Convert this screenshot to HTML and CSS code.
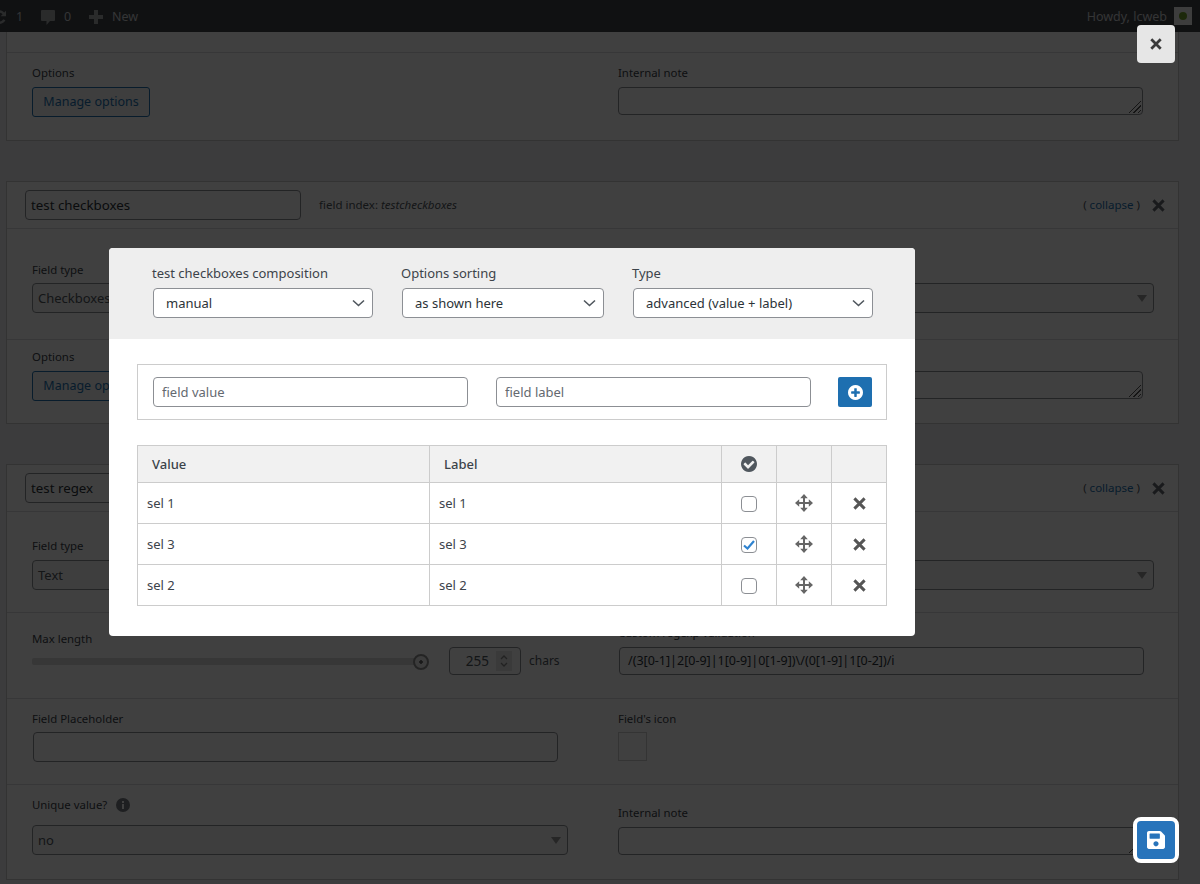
FILE: index.html
```html
<!DOCTYPE html>
<html lang="en">
<head>
<meta charset="utf-8">
<title>Field options</title>
<link rel="stylesheet" href="styles.css">
</head>
<body>
<header class="adminbar">
  <div class="bar-group">
    <svg class="bar-refresh" viewBox="0 0 20 20"><path d="M10.2 3.3c2 0 3.8.9 5 2.3l1.8-1.8v5.4h-5.400l2-2c-.9-1-2.100-1.600-3.400-1.600-2.500 0-4.500 2-4.500 4.500s2 4.500 4.500 4.500c1.700 0 3.200-1 4-2.400l2.200 1.100c-1.200 2.300-3.500 3.800-6.200 3.800-3.900 0-7-3.100-7-7s3.100-6.800 7-6.800z"/></svg>
    <span class="bar-num">1</span>
    <svg class="bar-comment" viewBox="0 0 14 16"><path d="M1 1h12a1 1 0 0 1 1 1v9a1 1 0 0 1-1 1H9l-3.500 4v-4H1a1 1 0 0 1-1-1V2a1 1 0 0 1 1-1z"/></svg>
    <span class="bar-num bar-zero">0</span>
    <svg class="bar-plus" viewBox="0 0 14 14"><path d="M5 0h4v5h5v4H9v5H5V9H0V5h5z"/></svg>
    <span class="bar-new">New</span>
  </div>
  <div class="bar-group">
    <span class="bar-howdy">Howdy, lcweb</span>
    <span class="bar-avatar"><i></i></span>
  </div>
</header>

<main class="page">
  <section class="card card-first">
    <div class="sec sec-top"></div>
    <div class="sec grid pad-a">
      <div><label class="lbl">Options</label><button class="btn-outline" type="button">Manage options</button></div>
      <div><label class="lbl">Internal note</label><div class="txtarea"></div></div>
    </div>
  </section>

  <section class="card">
    <div class="card-head">
      <input class="title-input" type="text" value="test checkboxes">
      <span class="index">field index: <em>testcheckboxes</em></span>
      <span class="collapse">( <a>collapse</a> )</span>
      <svg class="head-x" viewBox="0 0 14 14"><use href="#i-x"/></svg>
    </div>
    <div class="sec grid pad-b">
      <div><label class="lbl">Field type</label><div class="fake-select fake-left">Checkboxes</div></div>
      <div><label class="lbl"></label><div class="fake-select"></div></div>
    </div>
    <div class="sec grid pad-c">
      <div><label class="lbl">Options</label><button class="btn-outline" type="button">Manage options</button></div>
      <div><label class="lbl"></label><div class="txtarea"></div></div>
    </div>
  </section>

  <section class="card">
    <div class="card-head">
      <input class="title-input" type="text" value="test regex">
      <span class="collapse">( <a>collapse</a> )</span>
      <svg class="head-x" viewBox="0 0 14 14"><use href="#i-x"/></svg>
    </div>
    <div class="sec grid pad-d">
      <div><label class="lbl">Field type</label><div class="fake-select fake-left">Text</div></div>
      <div><label class="lbl"></label><div class="fake-select"></div></div>
    </div>
    <div class="sec grid pad-e">
      <div>
        <label class="lbl">Max length</label>
        <div class="slider-row">
          <div class="track"><span class="thumb"></span></div>
          <div class="num"><span>255</span>
            <svg class="spin" viewBox="0 0 16 20"><path d="M5 8l3-3 3 3M5 12l3 3 3-3"/></svg>
          </div>
          <span class="chars">chars</span>
        </div>
      </div>
      <div><label class="lbl lbl-raised">Custom regexp validation</label><div class="regex">/(3[0-1]|2[0-9]|1[0-9]|0[1-9])\/(0[1-9]|1[0-2])/i</div></div>
    </div>
    <div class="sec grid pad-f">
      <div><label class="lbl">Field Placeholder</label><div class="plain-input"></div></div>
      <div><label class="lbl">Field's icon</label><div class="icon-box"></div></div>
    </div>
    <div class="sec grid pad-g">
      <div>
        <label class="lbl lbl-unique">Unique value?
          <svg class="info" viewBox="0 0 14 14"><circle cx="7" cy="7" r="7"/><rect class="info-in" x="6" y="6" width="2" height="5"/><rect class="info-in" x="6" y="3" width="2" height="2"/></svg>
        </label>
        <div class="fake-select fake-left">no</div>
      </div>
      <div class="note-col"><label class="lbl">Internal note</label><div class="txtarea"></div></div>
    </div>
  </section>
</main>

<div class="overlay"></div>

<div class="modal">
  <div class="modal-top">
    <div class="mf mf-1"><label class="mlabel">test checkboxes composition</label>
      <select class="mselect"><option>manual</option></select></div>
    <div class="mf mf-2"><label class="mlabel">Options sorting</label>
      <select class="mselect"><option>as shown here</option></select></div>
    <div class="mf mf-3"><label class="mlabel">Type</label>
      <select class="mselect"><option>advanced (value + label)</option></select></div>
  </div>
  <div class="modal-body">
    <div class="add-row">
      <input class="minput" type="text" placeholder="field value">
      <input class="minput" type="text" placeholder="field label">
      <button class="add-btn" type="button" aria-label="Add">
        <svg viewBox="128 128 1536 1536"><path d="M1344 960v-128q0-26-19-45t-45-19h-256v-256q0-26-19-45t-45-19h-128q-26 0-45 19t-19 45v256h-256q-26 0-45 19t-19 45v128q0 26 19 45t45 19h256v256q0 26 19 45t45 19h128q26 0 45-19t19-45v-256h256q26 0 45-19t19-45zm320-64q0 209-103 385.500t-279.500 279.500-385.500 103-385.500-103-279.500-279.500-103-385.500 103-385.500 279.500-279.500 385.500-103 385.500 103 279.500 279.500 103 385.500z"/></svg>
      </button>
    </div>
    <table class="opts">
      <thead>
        <tr>
          <th class="c-text">Value</th>
          <th class="c-text">Label</th>
          <th class="c-ic"><svg class="th-check" viewBox="128 128 1536 1536"><path d="M1412 734q0-28-18-46l-91-90q-19-19-45-19t-45 19l-408 407-226-226q-19-19-45-19t-45 19l-91 90q-18 18-18 46 0 27 18 45l362 362q19 19 45 19 27 0 46-19l543-543q18-18 18-45zm252 162q0 209-103 385.500t-279.500 279.500-385.500 103-385.500-103-279.500-279.500-103-385.500 103-385.500 279.500-279.500 385.500-103 385.500 103 279.500 279.500 103 385.500z"/></svg></th>
          <th class="c-ic"></th>
          <th class="c-ic"></th>
        </tr>
      </thead>
      <tbody>
        <tr>
          <td>sel 1</td><td>sel 1</td>
          <td class="c-mid"><input class="chk" type="checkbox"></td>
          <td class="c-mid"><svg class="mv" viewBox="0 0 18 18"><use href="#i-move"/></svg></td>
          <td class="c-mid"><svg class="rm" viewBox="0 0 14 14"><use href="#i-x"/></svg></td>
        </tr>
        <tr>
          <td>sel 3</td><td>sel 3</td>
          <td class="c-mid"><input class="chk" type="checkbox" checked></td>
          <td class="c-mid"><svg class="mv" viewBox="0 0 18 18"><use href="#i-move"/></svg></td>
          <td class="c-mid"><svg class="rm" viewBox="0 0 14 14"><use href="#i-x"/></svg></td>
        </tr>
        <tr>
          <td>sel 2</td><td>sel 2</td>
          <td class="c-mid"><input class="chk" type="checkbox"></td>
          <td class="c-mid"><svg class="mv" viewBox="0 0 18 18"><use href="#i-move"/></svg></td>
          <td class="c-mid"><svg class="rm" viewBox="0 0 14 14"><use href="#i-x"/></svg></td>
        </tr>
      </tbody>
    </table>
  </div>
</div>

<button class="close-btn" type="button" aria-label="Close"><svg viewBox="0 0 14 14"><use href="#i-x"/></svg></button>
<button class="save-btn" type="button" aria-label="Save">
  <svg viewBox="0 32 448 448"><path d="M433.941 129.941l-83.882-83.882A48 48 0 0 0 316.118 32H48C21.490 32 0 53.490 0 80v352c0 26.510 21.490 48 48 48h352c26.510 0 48-21.490 48-48V163.882a48 48 0 0 0-14.059-33.941zM224 416c-35.346 0-64-28.654-64-64 0-35.346 28.654-64 64-64s64 28.654 64 64c0 35.346-28.654 64-64 64zm96-304.520V212c0 6.627-5.373 12-12 12H76c-6.627 0-12-5.373-12-12V108c0-6.627 5.373-12 12-12h228.520c3.183 0 6.235 1.264 8.485 3.515l3.480 3.480A11.996 11.996 0 0 1 320 111.480z"/></svg>
</button>

<svg class="defs" width="0" height="0" aria-hidden="true">
  <defs>
    <path id="i-x" d="M1.500 1.500l11 11M12.500 1.500l-11 11" fill="none" stroke="currentColor" stroke-width="3.200"/>
    <g id="i-move">
      <path d="M9 3v12M3 9h12" fill="none" stroke="currentColor" stroke-width="2"/>
      <path d="M9 0l3.800 4.200H5.200zM9 18l3.800-4.200H5.200zM0 9l4.200-3.800v7.600zM18 9l-4.200-3.800v7.600z" fill="currentColor"/>
    </g>
  </defs>
</svg>
</body>
</html>
```

FILE: styles.css
```css
* { box-sizing: border-box; }

html, body {
  margin: 0;
  height: 884px;
  overflow: hidden;
}

body {
  background: #f0f0f1;
  color: #3c434a;
  font: 12px/16px "Noto Sans", "Open Sans", "Liberation Sans", sans-serif;
  position: relative;
}

/* admin bar */
.adminbar {
  position: absolute;
  top: 0;
  left: 0;
  right: 0;
  height: 32px;
  background: #40444a;
  color: #d0d2d6;
  font-size: 12.500px;
  display: flex;
  justify-content: space-between;
  align-items: center;
  padding-top: 2px;
  z-index: 1;
}
.bar-group { display: flex; align-items: center; }
.bar-refresh { width: 20px; height: 20px; margin-left: -11px; fill: #a7aaad; }
.bar-num { margin-left: 7px; width: 6px; }
.bar-comment { width: 14px; height: 16px; margin-left: 19px; fill: #a7aaad; }
.bar-zero { margin-left: 9px; }
.bar-plus { width: 14px; height: 14px; margin-left: 19px; fill: #a7aaad; }
.bar-new { margin-left: 9px; }
.bar-howdy { margin-right: 7px; }
.bar-avatar {
  width: 18px;
  height: 18px;
  margin-right: 8px;
  margin-top: -2px;
  background: #f4f4f4;
  display: flex;
  align-items: center;
  justify-content: center;
}
.bar-avatar i { width: 8px; height: 8px; border-radius: 50%; background: #6fa02a; }

/* background page */
.page { padding: 0 21px 0 6px; }

.card {
  background: #fff;
  border: 1px solid #c9cacb;
  margin-bottom: 40px;
}
.card-first { border-top: 0; }

.card-head {
  height: 47px;
  display: flex;
  align-items: center;
  padding: 0 13px 0 18px;
  border-bottom: 1px solid #dcdcde;
}
.title-input {
  width: 276px;
  height: 30px;
  border: 1px solid #8c8f94;
  border-radius: 4px;
  background: #fff;
  padding: 0 5px;
  font: 13.300px/28px "Noto Sans", sans-serif;
  color: #2c3338;
}
.index { margin-left: 18px; font-size: 11.500px; color: #50575e; }
.collapse { margin-left: auto; font-size: 11.500px; color: #50575e; }
.collapse a { color: #2271b1; }
.head-x { width: 13px; height: 13px; margin-left: 12px; color: #646970; }

.sec {
  border-bottom: 1px solid #dcdcde;
  padding-left: 25px;
  padding-right: 24px;
}
.sec:last-child { border-bottom: 0; }
.grid { display: grid; grid-template-columns: 586px 1fr; }
.sec-top { height: 53px; }

.pad-a { height: 87px; padding-top: 12px; --lbl-gap: 6px; }
.pad-b { height: 111px; padding-top: 33px; --lbl-gap: 5px; }
.pad-c { height: 83px; padding-top: 9px; --lbl-gap: 6px; }
.pad-d { height: 101px; padding-top: 26px; --lbl-gap: 6px; }
.pad-e { height: 86px; padding-top: 18px; --lbl-gap: 0px; }
.pad-f { height: 86px; padding-top: 12px; --lbl-gap: 5px; }
.pad-g { height: 94px; padding-top: 12px; --lbl-gap: 6px; }

.lbl {
  display: block;
  min-height: 16px;
  margin-bottom: var(--lbl-gap);
  font-size: 11.400px;
  color: #3c434a;
}
.lbl-raised { position: relative; top: -6px; }
.lbl-unique { display: flex; align-items: center; gap: 9px; margin-bottom: 12px; }
.info { width: 14px; height: 14px; fill: #787c82; }
.info-in { fill: #fff; }
.note-col { padding-top: 8px; }

.btn-outline {
  display: block;
  width: 118px;
  height: 30px;
  padding: 0;
  background: #f6f7f7;
  border: 1px solid #2271b1;
  border-radius: 3px;
  color: #2271b1;
  font: 12.500px/28px "Noto Sans", sans-serif;
}
.txtarea {
  width: 525px;
  height: 28px;
  border: 1px solid #8c8f94;
  border-radius: 4px;
  background: #fff;
  position: relative;
}
.txtarea::after {
  content: "";
  position: absolute;
  right: 1px;
  bottom: 1px;
  width: 14px;
  height: 14px;
  background: repeating-linear-gradient(135deg, transparent 0 2px, #555 2px 3px);
  clip-path: polygon(100% 0, 100% 100%, 0 100%);
}
.fake-select {
  height: 30px;
  border: 1px solid #8c8f94;
  border-radius: 4px;
  background: #f6f6f6 url("data:image/svg+xml,%3Csvg xmlns='http://www.w3.org/2000/svg' width='10' height='7'%3E%3Cpath fill='%23999' d='M0 0h10L5 7z'/%3E%3C/svg%3E") no-repeat right 6px center;
  padding-left: 5px;
  font-size: 13px;
  line-height: 28px;
  color: #50575e;
}
.fake-left { width: 536px; }
.slider-row { display: flex; align-items: center; height: 28px; }
.track {
  width: 389px;
  height: 7px;
  background: #dadada;
  border-radius: 2px;
  position: relative;
}
.thumb {
  position: absolute;
  right: -8px;
  top: -4px;
  width: 16px;
  height: 16px;
  border: 2px solid #909090;
  border-radius: 50%;
  background: radial-gradient(circle, #666 0 1.500px, #f0f0f0 2px);
}
.num {
  width: 72px;
  height: 28px;
  margin-left: 28px;
  border: 1px solid #8c8f94;
  border-radius: 4px;
  background: #fff;
  display: flex;
  align-items: center;
  justify-content: flex-end;
  padding-right: 8px;
  color: #50575e;
  font-size: 13.500px;
}
.spin {
  width: 16px;
  height: 20px;
  margin-left: 7px;
  background: #e6e6e6;
  fill: none;
  stroke: #888;
  stroke-width: 1.300;
}
.chars { margin-left: 8px; color: #50575e; }
.regex {
  width: 525px;
  height: 28px;
  margin-left: 1px;
  border: 1px solid #8c8f94;
  border-radius: 4px;
  background: #fff;
  padding-left: 8px;
  line-height: 26px;
  font-size: 12.500px;
  color: #2c3338;
}
.plain-input {
  width: 525px;
  height: 30px;
  margin-left: 1px;
  border: 1px solid #8c8f94;
  border-radius: 4px;
  background: #fff;
}
.icon-box { width: 29px; height: 29px; border: 1px solid #d0d0d0; }

/* dim layer */
.overlay {
  position: absolute;
  inset: 0;
  background: rgba(0, 0, 0, 0.75);
  z-index: 2;
}

/* modal */
.modal {
  position: absolute;
  left: 109px;
  top: 248px;
  width: 806px;
  height: 388px;
  background: #fff;
  border-radius: 4px;
  overflow: hidden;
  z-index: 3;
  font-size: 13px;
}
.modal-top {
  height: 91px;
  background: #eee;
  padding: 17px 0 0 43px;
  display: flex;
  gap: 28px;
}
.mf { display: flex; flex-direction: column; }
.mf-1 { width: 221px; }
.mf-2 { width: 203px; }
.mf-3 { width: 241px; }
.mlabel { height: 16px; margin-bottom: 7px; color: #3c434a; white-space: nowrap; }
.mselect {
  appearance: none;
  height: 30px;
  margin-left: 1px;
  padding: 0 24px 0 12px;
  border: 1px solid #8c8f94;
  border-radius: 4px;
  color: #2c3338;
  font: 13px/28px "Noto Sans", "Open Sans", sans-serif;
  background: #fff url("data:image/svg+xml,%3Csvg xmlns='http://www.w3.org/2000/svg' width='13' height='8'%3E%3Cpath fill='none' stroke='%2350575e' stroke-width='1.600' d='M1 1.500l5.500 5 5.500-5'/%3E%3C/svg%3E") no-repeat right 7px center;
}
.modal-body { padding: 25px 28px 0; }

.add-row {
  height: 56px;
  border: 1px solid #ccc;
  padding: 12px 14px 12px 15px;
  display: flex;
  gap: 28px;
  margin-bottom: 25px;
}
.minput {
  flex: 0 0 315px;
  height: 30px;
  border: 1px solid #8c8f94;
  border-radius: 4px;
  padding: 0 8px;
  font: 13px/28px "Noto Sans", "Open Sans", sans-serif;
  color: #2c3338;
}
.minput::placeholder { color: #646970; opacity: 1; }
.add-btn {
  flex: 0 0 34px;
  margin-left: -1px;
  height: 30px;
  padding: 0;
  border: 0;
  border-radius: 2px;
  background: #1e6fb0;
  display: flex;
  align-items: center;
  justify-content: center;
}
.add-btn svg { width: 15px; height: 15px; fill: #fff; }

.opts {
  width: 749px;
  border-collapse: collapse;
  table-layout: fixed;
  color: #3c434a;
}
.opts th, .opts td { border: 1px solid #ccc; padding: 0; }
.opts th {
  height: 37px;
  background: #f1f1f1;
  font-weight: 500;
  text-align: left;
  color: #3c434a;
}
.opts td { height: 41px; padding-left: 9px; }
.opts th.c-text { width: 292px; padding-left: 14px; }
.opts th.c-ic { width: 55px; text-align: center; }
.opts td.c-mid { padding: 0; text-align: center; }
.opts svg { display: block; margin: 0 auto; }
.th-check { width: 16px; height: 16px; fill: #50575e; }
.mv { width: 18px; height: 18px; color: #666; }
.rm { width: 13px; height: 13px; color: #555; }

.chk {
  appearance: none;
  display: block;
  width: 16px;
  height: 16px;
  margin: 1px auto 0;
  border: 1px solid #8c8f94;
  border-radius: 4px;
  background: #fff;
}
.chk:checked {
  background: #fff url("data:image/svg+xml,%3Csvg xmlns='http://www.w3.org/2000/svg' width='12' height='10'%3E%3Cpath fill='none' stroke='%232f83d0' stroke-width='2.200' d='M1 5.500l3.500 3L11 1'/%3E%3C/svg%3E") no-repeat center;
}

/* floating actions */
.close-btn {
  position: absolute;
  left: 1137px;
  top: 25px;
  width: 38px;
  height: 38px;
  padding: 0;
  border: 0;
  border-radius: 4px;
  background: #e6e6e6;
  z-index: 3;
  display: flex;
  align-items: center;
  justify-content: center;
}
.close-btn svg { width: 12px; height: 12px; color: #3a3a3a; }

.save-btn {
  position: absolute;
  left: 1133px;
  top: 817px;
  width: 46px;
  height: 46px;
  padding: 0;
  border: 4px solid #fff;
  border-radius: 8px;
  background: #2874bb;
  z-index: 3;
  display: flex;
  align-items: center;
  justify-content: center;
}
.save-btn svg { width: 18px; height: 18px; fill: #fff; }

.defs { position: absolute; }
```
